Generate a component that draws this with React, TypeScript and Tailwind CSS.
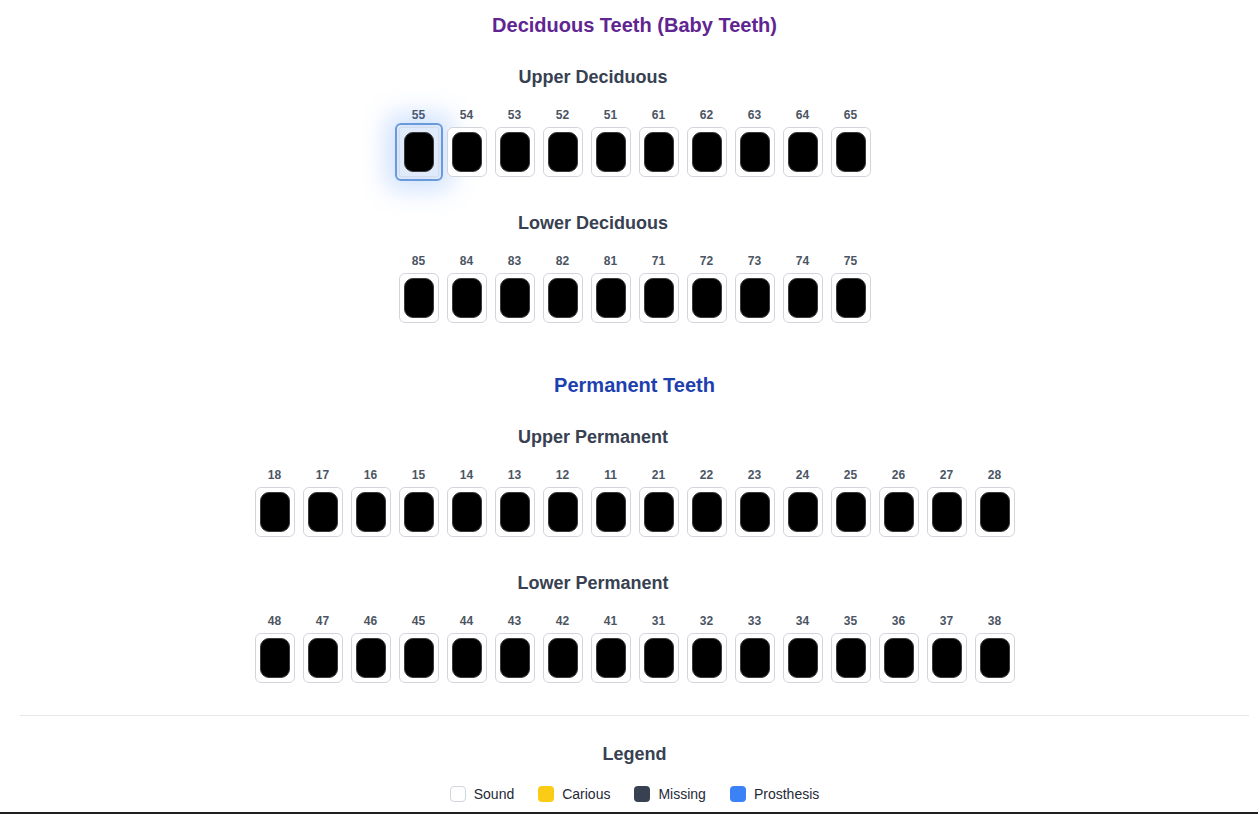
const upperDeciduous = [55, 54, 53, 52, 51, 61, 62, 63, 64, 65];
const lowerDeciduous = [85, 84, 83, 82, 81, 71, 72, 73, 74, 75];
const upperPermanent = [18, 17, 16, 15, 14, 13, 12, 11, 21, 22, 23, 24, 25, 26, 27, 28];
const lowerPermanent = [48, 47, 46, 45, 44, 43, 42, 41, 31, 32, 33, 34, 35, 36, 37, 38];

const legend = [
  { label: "Sound", swatch: "bg-white border border-gray-300" },
  { label: "Carious", swatch: "bg-[#facc15]" },
  { label: "Missing", swatch: "bg-[#374151]" },
  { label: "Prosthesis", swatch: "bg-[#3b82f6]" },
];

function Tooth({ num, selected }: { num: number; selected?: boolean }) {
  return (
    <div className="flex flex-col items-center">
      <span className="text-xs font-bold leading-4 text-[#4b5563] mb-1">
        {num}
      </span>
      <div
        className={
          selected
            ? "w-10 h-[50px] flex items-center justify-center rounded-[2px] border border-[#d6dde8] bg-[#dfeafb] outline-2 outline-offset-2 outline-[#6b9ad9] shadow-[0_0_26px_12px_rgba(59,130,246,0.26)]"
            : "w-10 h-[50px] flex items-center justify-center rounded-md border border-[#d1d5db] bg-white"
        }
      >
        <div className="w-[30px] h-10 rounded-[9px] bg-black border border-[#3a3a3a]" />
      </div>
    </div>
  );
}

function ToothRow({
  title,
  teeth,
  selectedTooth,
}: {
  title: string;
  teeth: number[];
  selectedTooth?: number;
}) {
  return (
    <div className="flex flex-col items-center">
      <h3 className="w-full pr-[83px] text-center text-lg leading-7 font-bold text-[#374151] mb-4">
        {title}
      </h3>
      <div className="flex justify-center gap-2">
        {teeth.map((t) => (
          <Tooth key={t} num={t} selected={t === selectedTooth} />
        ))}
      </div>
    </div>
  );
}

export default function App() {
  return (
    <div className="min-h-screen bg-white font-['Liberation_Sans',Arial,sans-serif]">
      <div className="ml-5 mr-[9px] pt-[11px]">
        {/* Deciduous */}
        <h2 className="text-xl leading-7 font-bold text-[#602591] text-center mb-6">
          Deciduous Teeth (Baby Teeth)
        </h2>
        <ToothRow title="Upper Deciduous" teeth={upperDeciduous} selectedTooth={55} />
        <div className="mt-8">
          <ToothRow title="Lower Deciduous" teeth={lowerDeciduous} />
        </div>

        {/* Permanent */}
        <h2 className="mt-12 text-xl leading-7 font-bold text-[#1e40af] text-center mb-6">
          Permanent Teeth
        </h2>
        <ToothRow title="Upper Permanent" teeth={upperPermanent} />
        <div className="mt-8">
          <ToothRow title="Lower Permanent" teeth={lowerPermanent} />
        </div>

        {/* Legend */}
        <div className="mt-8 border-t border-[#e5e7eb] pt-6 pb-[10px]">
          <h3 className="text-lg leading-7 font-bold text-[#374151] text-center">
            Legend
          </h3>
          <div className="mt-[18px] flex justify-center gap-6">
            {legend.map((item) => (
              <div key={item.label} className="flex items-center gap-2 h-4">
                <span className={`w-4 h-4 rounded ${item.swatch}`} />
                <span className="text-sm text-[#1f2937]">{item.label}</span>
              </div>
            ))}
          </div>
        </div>
      </div>
      <div className="h-6 bg-[#1f1f1f]" />
    </div>
  );
}
